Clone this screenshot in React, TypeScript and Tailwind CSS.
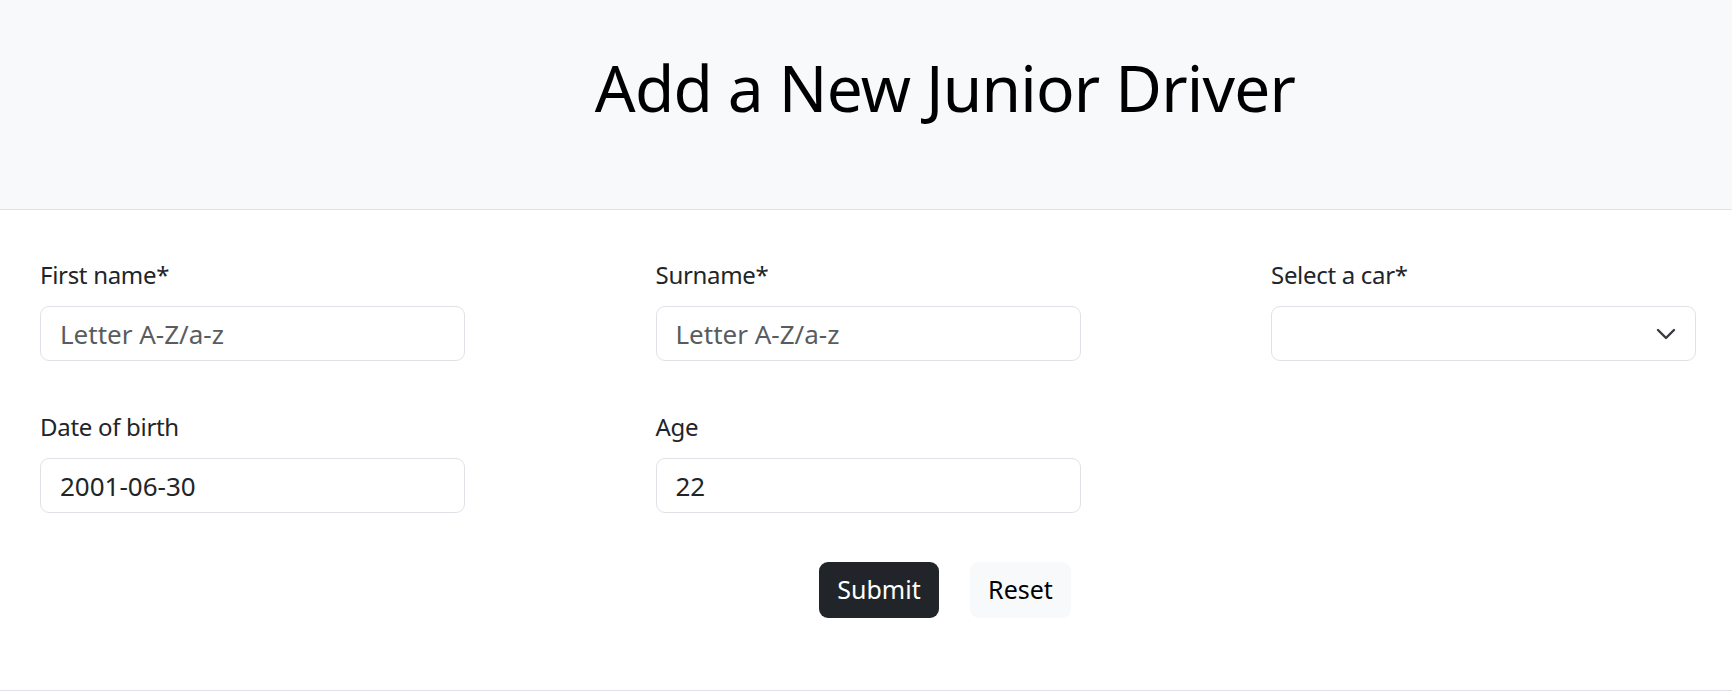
import { ChevronDown } from "lucide-react";

const font = { fontFamily: '"Noto Sans", "Open Sans", sans-serif' };

const Field = ({
  label,
  placeholder,
  value,
}: {
  label: string;
  placeholder?: string;
  value?: string;
}) => (
  <div className="flex flex-col">
    <label className="text-[24px] leading-[36px] tracking-[-0.3px] text-[#212529] mb-[13px]">{label}</label>
    <input
      className="h-[55px] w-full rounded-[9px] border border-[#dee2e6] bg-white pl-[19px] pr-4 text-[26px] text-[#212529] placeholder:text-[#595c5f] outline-none"
      placeholder={placeholder}
      defaultValue={value}
    />
  </div>
);

export default function App() {
  return (
    <div className="min-h-[697px] bg-white" style={font}>
      {/* header */}
      <div className="h-[210px] bg-[#f8f9fa] border-b border-[#dee2e6] pl-[158px] pt-[48px] flex justify-center">
        <h1 className="text-[64px] leading-[80px] tracking-[-0.8px] text-black font-normal">Add a New Junior Driver</h1>
      </div>

      {/* form */}
      <div className="border-b border-[#dee2e6] pt-[47px] pb-[72px]">
        <div className="grid grid-cols-[425px_425px_425px] justify-between gap-y-[48px] pl-[40px] pr-[36px]">
          <Field label="First name*" placeholder="Letter A-Z/a-z" />
          <Field label="Surname*" placeholder="Letter A-Z/a-z" />
          <div className="flex flex-col">
            <label className="text-[24px] leading-[36px] tracking-[-0.3px] text-[#212529] mb-[13px]">Select a car*</label>
            <div className="relative">
              <select className="h-[55px] w-full appearance-none rounded-[9px] border border-[#dee2e6] bg-white pl-[19px] text-[26px] text-[#212529] outline-none">
                <option value=""></option>
              </select>
              <ChevronDown
                className="pointer-events-none absolute right-[14px] top-[12px] text-[#343a40]"
                size={32}
                strokeWidth={1.8}
              />
            </div>
          </div>
          <Field label="Date of birth" value="2001-06-30" />
          <Field label="Age" value="22" />
          <div />
        </div>

        <div className="mt-[49px] pl-[158px] flex justify-center gap-[31px]">
          <button className="h-[56px] w-[120px] rounded-[9px] bg-[#212529] text-[25px] text-white">Submit</button>
          <button className="h-[56px] w-[101px] rounded-[9px] bg-[#f8f9fa] text-[25px] text-black">Reset</button>
        </div>
      </div>
    </div>
  );
}
